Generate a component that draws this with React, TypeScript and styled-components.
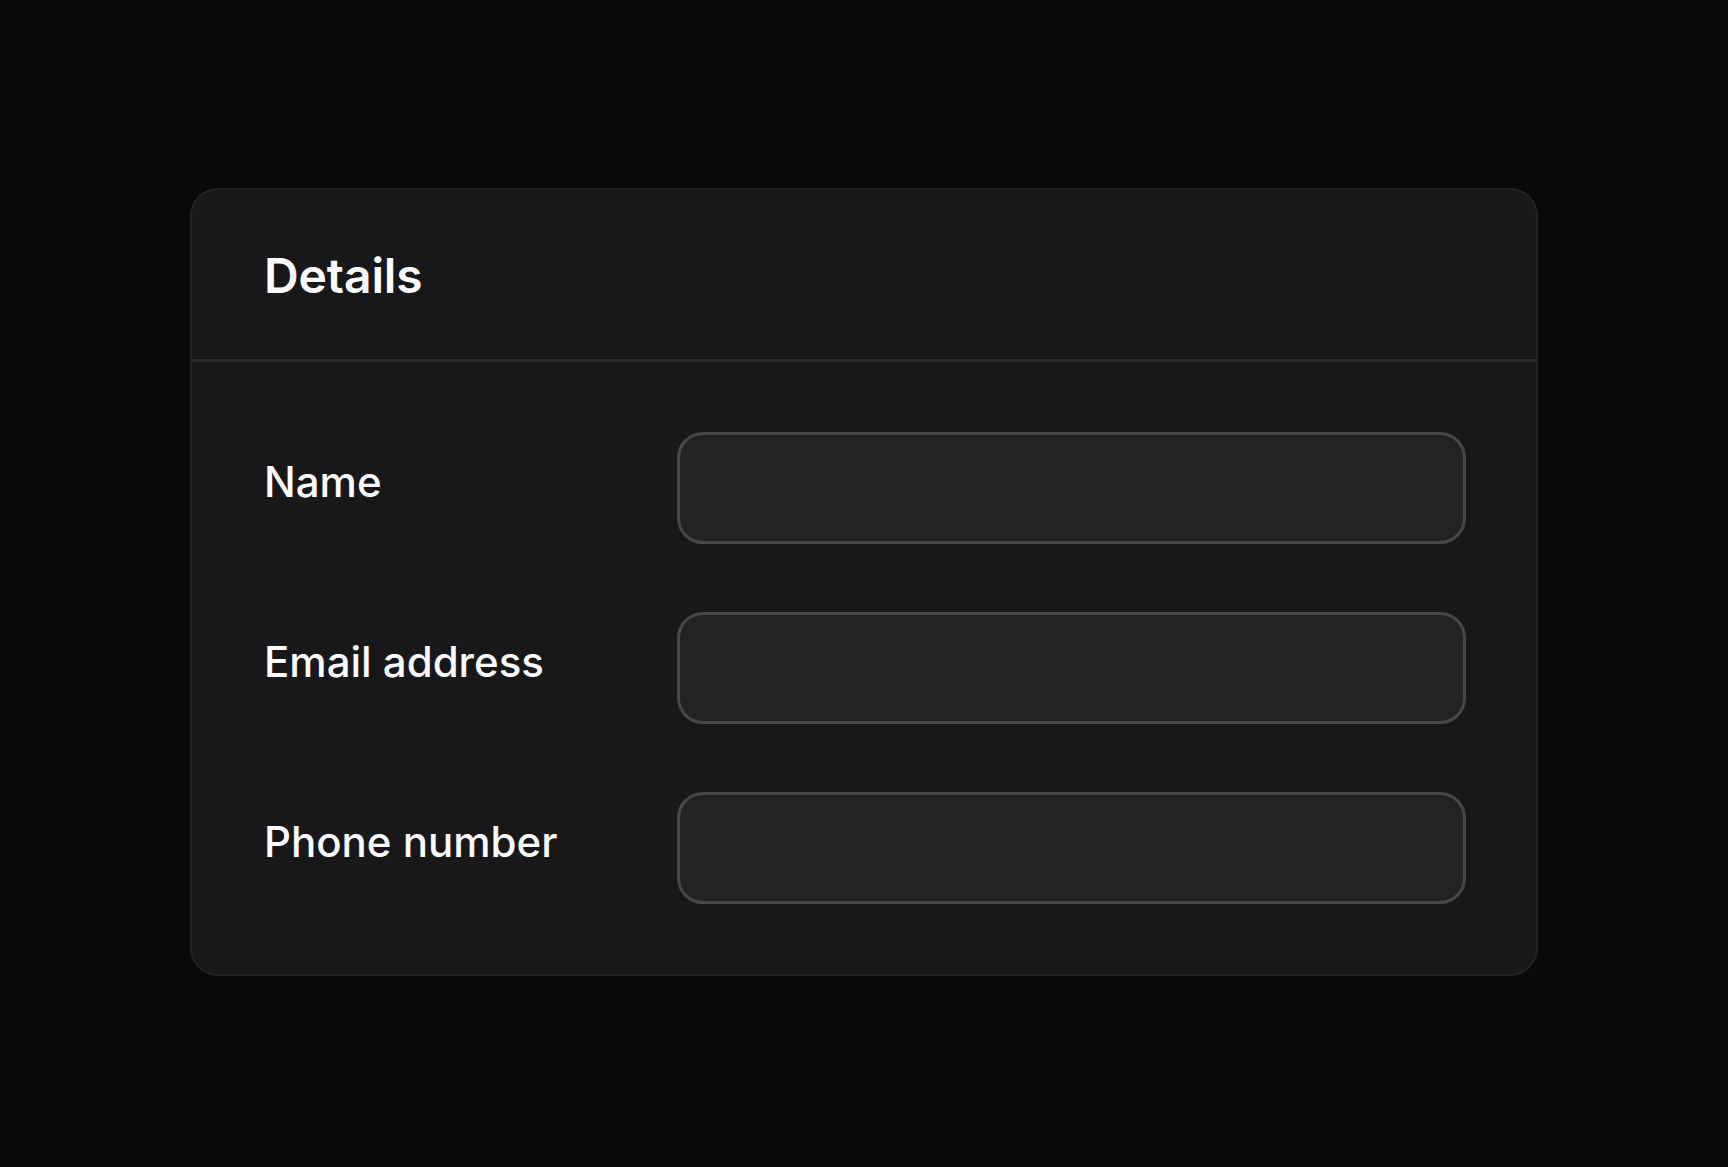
import React from "react";
import styled, { createGlobalStyle } from "styled-components";

const Global = createGlobalStyle`
  html, body {
    margin: 0;
    padding: 0;
    background: #09090b;
    height: 100%;
  }
  #root {
    min-height: 100vh;
  }
  * { box-sizing: border-box; }
`;

const Page = styled.main`
  min-height: 100vh;
  display: flex;
  align-items: center;
  justify-content: center;
  padding-bottom: 3px;
  background: #09090b;
  font-family: Inter, "Noto Sans", sans-serif;
  color: #fafafa;
`;

const Card = styled.section`
  width: 1348px;
  background: #18181b;
  border: 2px solid #232326;
  border-radius: 28px;
  overflow: hidden;
`;

const Header = styled.header`
  height: 172px;
  display: flex;
  align-items: center;
  padding: 3px 72px 0;
  border-bottom: 3px solid #2c2c2f;
`;

const Title = styled.h2`
  margin: 0;
  font-size: 48px;
  font-weight: 600;
  line-height: 1;
  letter-spacing: -0.1px;
  color: #fafafa;
`;

const Body = styled.div`
  display: flex;
  flex-direction: column;
  gap: 68px;
  padding: 70px 70px 70px 72px;
`;

const Row = styled.label`
  display: grid;
  grid-template-columns: 413px 1fr;
  align-items: center;
`;

const LabelText = styled.span`
  font-size: 42px;
  font-weight: 500;
  line-height: 1;
  color: #fafafa;
  padding-bottom: 12px;
`;

const Field = styled.input`
  height: 112px;
  width: 100%;
  background: #232326;
  border: 3px solid #48484b;
  border-radius: 26px;
  outline: none;
  padding: 0 28px;
  font-family: inherit;
  font-size: 36px;
  color: #fafafa;
`;

const fields = [
  { id: "name", label: "Name", type: "text" },
  { id: "email", label: "Email address", type: "email" },
  { id: "phone", label: "Phone number", type: "tel" },
];

export default function App() {
  return (
    <>
      <Global />
      <Page>
        <Card>
          <Header>
            <Title>Details</Title>
          </Header>
          <Body>
            {fields.map((f) => (
              <Row key={f.id} htmlFor={f.id}>
                <LabelText>{f.label}</LabelText>
                <Field id={f.id} type={f.type} />
              </Row>
            ))}
          </Body>
        </Card>
      </Page>
    </>
  );
}
